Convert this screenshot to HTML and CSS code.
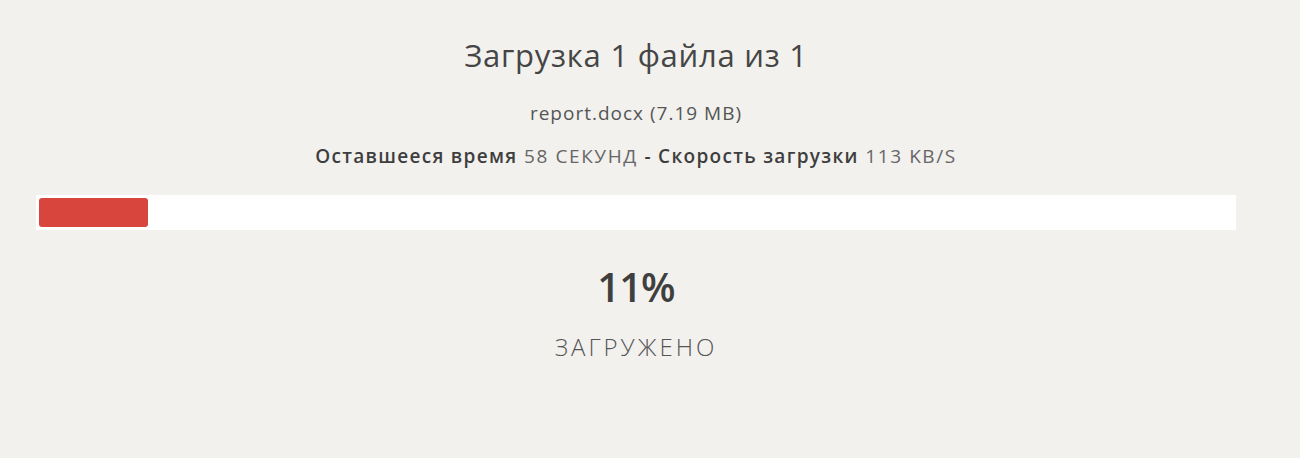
FILE: index.html
```html
<!DOCTYPE html>
<html lang="ru">
<head>
<meta charset="utf-8">
<link rel="stylesheet" href="styles.css">
</head>
<body>
<div class="upload">
  <h1 class="title">Загрузка 1 файла из 1</h1>
  <p class="file">report.docx (7.19 MB)</p>
  <p class="info"><b>Оставшееся время</b> 58 СЕКУНД <b>- Скорость загрузки</b> 113 KB/S</p>
  <div class="track"><div class="fill" style="width: 109px"></div></div>
  <div class="percent">11%</div>
  <div class="label">ЗАГРУЖЕНО</div>
</div>
</body>
</html>
```
FILE: styles.css
```css
html, body {
  margin: 0;
  padding: 0;
  background: #f2f1ee;
}
body {
  font-family: "Open Sans", Lato, sans-serif;
  color: #444;
}
.upload {
  width: 1200px;
  margin-left: 36px;
  display: flex;
  flex-direction: column;
  align-items: center;
  padding-top: 37px;
}
.title {
  margin: 0;
  font-size: 31px;
  font-weight: 400;
  line-height: 36px;
  letter-spacing: 0.75px;
  color: #454545;
}
.file {
  margin: 28px 0 0;
  font-size: 19px;
  line-height: 24px;
  font-weight: 400;
  letter-spacing: 1px;
  color: #555;
}
.info {
  margin: 19px 0 0;
  font-size: 19px;
  line-height: 24px;
  font-weight: 400;
  letter-spacing: 1.6px;
  color: #666;
}
.info b {
  font-weight: 600;
  letter-spacing: 1.3px;
  color: #3e3e3e;
}
.track {
  align-self: stretch;
  margin-top: 27px;
  height: 35px;
  background: #ffffff;
  padding: 3px;
  box-sizing: border-box;
}
.fill {
  height: 100%;
  background: #d8453d;
  border-radius: 3px;
}
.percent {
  margin-top: 32px;
  font-size: 40px;
  line-height: 50px;
  font-weight: 600;
  letter-spacing: -1px;
  color: #3f3f3f;
}
.label {
  margin-top: 21px;
  font-size: 24px;
  line-height: 28px;
  font-weight: 300;
  letter-spacing: 3px;
  color: #555;
}
```
